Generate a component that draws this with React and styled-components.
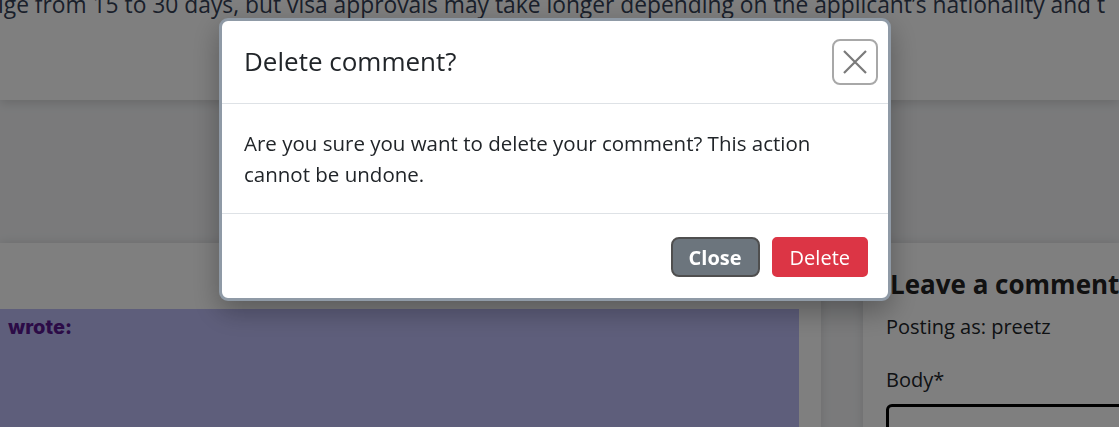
import React from "react";
import styled, { createGlobalStyle } from "styled-components";

const Global = createGlobalStyle`
  html, body { margin: 0; padding: 0; }
  body {
    overflow: hidden;
    font-family: "Open Sans", "Noto Sans", sans-serif;
    background: #f4f5f7;
  }
  * { box-sizing: border-box; }
`;

const Page = styled.div`
  height: 427px;
  overflow: hidden;
  background: #f4f5f7;
`;

const TopCard = styled.div`
  height: 100px;
  background: #ffffff;
  box-shadow: 0 3px 10px rgba(0, 0, 0, 0.14);
  overflow: hidden;
  position: relative;
`;

const Lead = styled.p`
  margin: -12px 0 0 -2px;
  white-space: nowrap;
  font-size: 22.8px;
  line-height: 34px;
  color: #344055;
`;

const Columns = styled.div`
  display: flex;
  gap: 42px;
  margin-top: 143px;
`;

const MainCard = styled.div`
  flex: 0 0 821px;
  height: 190px;
  background: #ffffff;
  box-shadow: 0 0 10px rgba(0, 0, 0, 0.12);
  padding: 66px 22px 0 0;
`;

const CommentBox = styled.div`
  background: #bdbdf7;
  height: 140px;
  padding: 6px 8px;
`;

const Author = styled.span`
  font-family: Inter, "Noto Sans", sans-serif;
  font-weight: 800;
  font-size: 20px;
  color: #58178f;
`;

const SideCard = styled.div`
  flex: 1 1 auto;
  height: 190px;
  background: #ffffff;
  box-shadow: 0 0 10px rgba(0, 0, 0, 0.12);
  padding: 24px 0 0 23px;
  white-space: nowrap;
  overflow: hidden;
`;

const SideTitle = styled.h2`
  margin: 0 0 11px 4px;
  font-size: 26px;
  line-height: 34px;
  font-weight: 700;
  color: #222;
`;

const Meta = styled.div`
  font-size: 20px;
  line-height: 30px;
  color: #212529;
  margin-bottom: 23px;
`;

const Label = styled.div`
  font-size: 20px;
  line-height: 30px;
  color: #212529;
  margin-bottom: 9px;
`;

const TextArea = styled.div`
  width: 260px;
  height: 60px;
  border: 3px solid #000;
  border-radius: 6px;
`;

const Backdrop = styled.div`
  position: fixed;
  inset: 0;
  background: rgba(0, 0, 0, 0.5);
`;

const Dialog = styled.div`
  position: fixed;
  left: 219px;
  top: 18px;
  width: 672px;
  background: #ffffff;
  border: 3px solid #8f9aa6;
  border-radius: 9px;
  box-shadow: 0 10px 28px rgba(0, 0, 0, 0.3);
  color: #212529;
`;

const Header = styled.div`
  display: flex;
  align-items: center;
  justify-content: space-between;
  padding: 18px 10px 18px 22px;
  border-bottom: 1px solid #dee2e6;
`;

const Title = styled.h5`
  margin: 0;
  font-size: 26px;
  font-weight: 500;
  line-height: 1.2;
`;

const XButton = styled.button`
  width: 46px;
  height: 46px;
  padding: 0;
  border: 2px solid #a8a8a8;
  border-radius: 8px;
  background: #fff;
  display: flex;
  align-items: center;
  justify-content: center;
`;

const Body = styled.div`
  padding: 24px 22px 23px;
  font-size: 20.5px;
  line-height: 31px;
`;

const Footer = styled.div`
  display: flex;
  justify-content: flex-end;
  gap: 12px;
  padding: 23px 20px 21px;
  border-top: 1px solid #dee2e6;
`;

const Button = styled.button`
  height: 40px;
  padding: 0 16px;
  font-family: inherit;
  font-size: 20px;
  font-weight: ${(p) => (p.$variant === "danger" ? 400 : 700)};
  color: #fff;
  background: ${(p) => (p.$variant === "danger" ? "#dc3545" : "#6c757d")};
  border: 2px solid ${(p) => (p.$variant === "danger" ? "#dc3545" : "#4f4f4f")};
  border-radius: ${(p) => (p.$variant === "danger" ? "5px" : "8px")};
`;

export default function App() {
  return (
    <>
      <Global />
      <Page>
        <TopCard>
          <Lead>
            ige from 15 to 30 days, but visa approvals may take longer depending on the applicant’s nationality and t
          </Lead>
        </TopCard>
        <Columns>
          <MainCard>
            <CommentBox>
              <Author>wrote:</Author>
            </CommentBox>
          </MainCard>
          <SideCard>
            <SideTitle>Leave a comment</SideTitle>
            <Meta>Posting as: preetz</Meta>
            <Label>Body*</Label>
            <TextArea />
          </SideCard>
        </Columns>
      </Page>
      <Backdrop />
      <Dialog role="dialog">
        <Header>
          <Title>Delete comment?</Title>
          <XButton aria-label="Close">
            <svg width="26" height="26" viewBox="0 0 26 26">
              <path d="M2 2 L24 24 M24 2 L2 24" stroke="#7a7a7a" strokeWidth="2.2" fill="none" />
            </svg>
          </XButton>
        </Header>
        <Body>
          Are you sure you want to delete your comment? This action
          <br />
          cannot be undone.
        </Body>
        <Footer>
          <Button>Close</Button>
          <Button $variant="danger">Delete</Button>
        </Footer>
      </Dialog>
    </>
  );
}
